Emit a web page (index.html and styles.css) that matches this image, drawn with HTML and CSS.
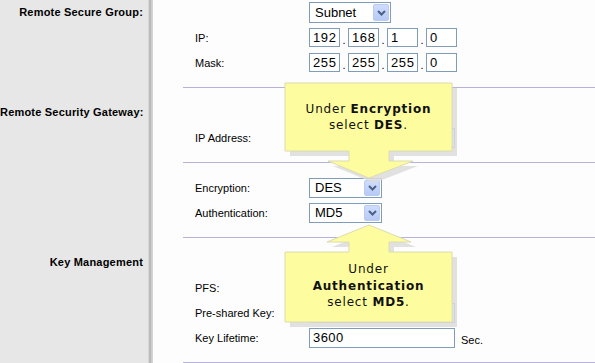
FILE: index.html
```html
<!DOCTYPE html>
<html>
<head>
<meta charset="utf-8">
<link rel="stylesheet" href="styles.css">
</head>
<body>
<div class="page">
  <section class="sec first">
    <div class="side"><span class="lbl">Remote Secure Group:</span></div>
    <div class="sep"></div>
    <div class="main"><div class="body">
      <div class="row"><span class="fl"></span>
        <div class="sel w82"><span class="val">Subnet</span><span class="btn"><svg width="9" height="6" viewBox="0 0 9 6"><path d="M1 1 L4.5 4.5 L8 1" fill="none" stroke="#4d6185" stroke-width="2"/></svg></span></div>
      </div>
      <div class="row"><span class="fl">IP:</span>
        <div class="ip"><input class="oct" value="192" readonly><span class="dot">.</span><input class="oct" value="168" readonly><span class="dot">.</span><input class="oct" value="1" readonly><span class="dot">.</span><input class="oct" value="0" readonly></div>
      </div>
      <div class="row"><span class="fl">Mask:</span>
        <div class="ip"><input class="oct" value="255" readonly><span class="dot">.</span><input class="oct" value="255" readonly><span class="dot">.</span><input class="oct" value="255" readonly><span class="dot">.</span><input class="oct" value="0" readonly></div>
      </div>
    </div></div>
  </section>

  <section class="sec">
    <div class="side"><span class="lbl">Remote Security Gateway:</span></div>
    <div class="sep"></div>
    <div class="main"><div class="body">
      <div class="row"><span class="fl"></span>
        <div class="sel w82"><span class="val"></span><span class="btn"></span></div>
      </div>
      <div class="row"><span class="fl">IP Address:</span>
        <input class="txt" value="" readonly>
      </div>
    </div></div>
  </section>

  <section class="sec">
    <div class="side"></div>
    <div class="sep"></div>
    <div class="main"><div class="body">
      <div class="row"><span class="fl">Encryption:</span>
        <div class="sel w73"><span class="val">DES</span><span class="btn"><svg width="9" height="6" viewBox="0 0 9 6"><path d="M1 1 L4.5 4.5 L8 1" fill="none" stroke="#4d6185" stroke-width="2"/></svg></span></div>
      </div>
      <div class="row"><span class="fl">Authentication:</span>
        <div class="sel w73"><span class="val">MD5</span><span class="btn"><svg width="9" height="6" viewBox="0 0 9 6"><path d="M1 1 L4.5 4.5 L8 1" fill="none" stroke="#4d6185" stroke-width="2"/></svg></span></div>
      </div>
    </div></div>
  </section>

  <section class="sec">
    <div class="side"><span class="lbl">Key Management</span></div>
    <div class="sep"></div>
    <div class="main"><div class="body">
      <div class="row"><span class="fl"></span></div>
      <div class="row"><span class="fl">PFS:</span>
        <div class="sel w82"><span class="val"></span><span class="btn"></span></div>
      </div>
      <div class="row"><span class="fl">Pre-shared Key:</span>
        <input class="txt" value="" readonly>
      </div>
      <div class="row"><span class="fl">Key Lifetime:</span>
        <input class="txt" value="3600" readonly><span class="unit">Sec.</span>
      </div>
    </div></div>
  </section>

  <svg class="overlay" width="595" height="363" viewBox="0 0 595 363">
    <polygon class="shadow" transform="translate(5,5)" points="285,83 452,83 452,151 389,151 389,161 413,161 369,178 328,161 349,161 349,151 285,151"/>
    <polygon class="bubble" points="285,83 452,83 452,151 389,151 389,161 413,161 369,178 328,161 349,161 349,151 285,151"/>
    <polygon class="shadow" transform="translate(5,5)" points="285,252 349,252 349,242 327,242 369,225 411,242 389,242 389,252 452,252 452,322 285,322"/>
    <polygon class="bubble" points="285,252 349,252 349,242 327,242 369,225 411,242 389,242 389,252 452,252 452,322 285,322"/>
  </svg>
  <div class="note n1"><p class="ntext">Under <b>Encryption</b><br>select <b>DES</b>.</p></div>
  <div class="note n2"><p class="ntext">Under<br><b>Authentication</b><br>select <b>MD5</b>.</p></div>
</div>
</body>
</html>
```
FILE: styles.css
```css
html, body {
  margin: 0;
  padding: 0;
  background: #fdfdfd;
}
.page {
  position: relative;
  width: 595px;
  height: 363px;
  overflow: hidden;
  font-family: "Liberation Sans", Arial, sans-serif;
  font-size: 11px;
  color: #000;
}
.sec {
  display: grid;
  grid-template-columns: 148px 5px 1fr;
}
.side {
  background: #e7e7e7;
  text-align: right;
  padding: 12px 5px 0 0;
}
.first .side { padding-top: 0; }
.lbl {
  display: block;
  line-height: 25px;
  font-weight: bold;
  letter-spacing: 0.2px;
  white-space: nowrap;
}
.sep {
  background: linear-gradient(to right, #d8d8d8 0, #d8d8d8 1px, #bbbbbb 1px, #bbbbbb 3px, #cbcbcb 3px, #d6d6d6 5px);
}
.main {
  padding-left: 30px;
}
.body {
  border-bottom: 1px solid #b7b3dc;
  padding: 12px 0 12px 12px;
}
.first .body { padding-top: 0; }
.row {
  height: 25px;
  display: flex;
  align-items: center;
}
.fl {
  width: 114px;
  flex: none;
}
.sel {
  box-sizing: border-box;
  height: 21px;
  border: 1px solid #7f9db9;
  background: #fff;
  display: flex;
  align-items: center;
  justify-content: space-between;
  padding: 0 1px 0 5px;
  font-size: 13px;
}
.w82 { width: 82px; }
.w73 { width: 73px; height: 20px; }
.btn {
  box-sizing: border-box;
  width: 16px;
  height: 17px;
  border: 1px solid #b9cbf3;
  border-radius: 2px;
  background: linear-gradient(#cfdcfd, #b7caf6);
  display: flex;
  align-items: center;
  justify-content: center;
}
.w73 .btn { height: 16px; }
.ip {
  display: flex;
  align-items: center;
}
input {
  font-family: "Liberation Sans", Arial, sans-serif;
  font-size: 13px;
  color: #000;
  margin: 0;
  outline: none;
}
.oct {
  box-sizing: border-box;
  width: 31px;
  height: 19px;
  border: 1px solid #7f9db9;
  padding: 0 0 0 3px;
  letter-spacing: 0.6px;
  background: #fff;
}
.dot {
  width: 8px;
  text-align: center;
  font-size: 11px;
  padding-top: 4px;
}
.txt {
  box-sizing: border-box;
  width: 146px;
  height: 20px;
  border: 1px solid #7f9db9;
  padding: 0 0 0 3px;
  background: #fff;
  letter-spacing: 0.4px;
}
.unit {
  margin-left: 6px;
  padding-top: 4px;
}
.overlay {
  position: absolute;
  left: 0;
  top: 0;
  pointer-events: none;
}
.shadow { fill: #dcdcdc; opacity: 0.85; }
.bubble { fill: #fdfd9f; stroke: #dcdcb0; stroke-width: 1; }
.note {
  position: absolute;
  left: 285px;
  width: 167px;
  display: flex;
  align-items: center;
  justify-content: center;
}
.ntext {
  margin: 0;
  text-align: center;
  font-family: "DejaVu Sans", Verdana, sans-serif;
  font-size: 12px;
  line-height: 16px;
  letter-spacing: 0.8px;
  color: #111;
}
.n1 { top: 83px; height: 68px; }
.n2 { top: 252px; height: 68px; }
.n2 .ntext { line-height: 16.5px; }
```
